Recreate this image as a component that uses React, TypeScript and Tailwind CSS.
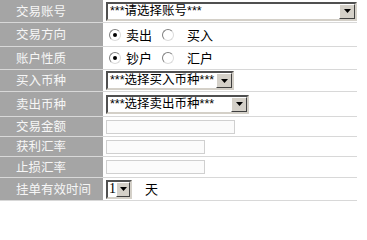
import React from "react"

const font = { fontFamily: '"Noto Sans CJK SC", "Liberation Sans", sans-serif' }

function Arrow({ w }: { w: string }) {
  return (
    <div
      className={`flex h-full shrink-0 items-center justify-center border border-t-white border-l-white border-b-[#404040] border-r-[#404040] bg-[#d4d0c8] ${w}`}
    >
      <svg width="7" height="4" viewBox="0 0 7 4">
        <path d="M0 0h7L3.5 4z" fill="#000" />
      </svg>
    </div>
  )
}

function Select({ text, width, serif }: { text: string; width: string; serif?: boolean }) {
  return (
    <div
      className={`flex h-[19px] shrink-0 items-stretch border-2 border-t-[#505050] border-l-[#505050] border-b-[#d4d0c8] border-r-[#d4d0c8] bg-white ${width}`}
    >
      <div
        className={`flex min-w-0 flex-1 items-center overflow-hidden whitespace-nowrap leading-none text-black ${serif ? "pl-[1px] text-[14px]" : "pl-[2px] text-[12.5px]"}`}
        style={{
          fontFamily: serif
            ? '"Liberation Serif", serif'
            : '"Liberation Sans", "Noto Sans CJK SC", sans-serif',
        }}
      >
        {text}
      </div>
      <Arrow w={serif ? "w-[14px]" : "w-[16px]"} />
    </div>
  )
}

function Radio({ checked }: { checked?: boolean }) {
  return (
    <div className="flex h-[12px] w-[12px] shrink-0 items-center justify-center rounded-full border border-t-[#808080] border-l-[#808080] border-b-[#dcdcdc] border-r-[#dcdcdc] bg-white">
      {checked && <div className="h-[4px] w-[4px] rounded-full bg-black" />}
    </div>
  )
}

function Row({ label, h, children }: { label: string; h: string; children: React.ReactNode }) {
  return (
    <div className={`flex ${h}`}>
      <div className="flex w-[103px] items-center bg-[#a5a5a5] pl-[16px] text-[12.5px] text-[#f6f6f6]">
        {label}
      </div>
      <div className="flex flex-1 items-center bg-white pl-[3px]">{children}</div>
    </div>
  )
}

function RadioPair({ a, b }: { a: string; b: string }) {
  return (
    <div className="flex items-center pl-[3px] text-[13px] text-black">
      <Radio checked />
      <span className="ml-[5px]">{a}</span>
      <span className="ml-[10px]" />
      <Radio />
      <span className="ml-[13px]">{b}</span>
    </div>
  )
}

function Input({ width }: { width: string }) {
  return <div className={`h-[14px] border border-[#d0d0d0] bg-[#fbfbfb] ${width}`} />
}

export default function App() {
  return (
    <div className="h-[202px] w-[367px] bg-white" style={font}>
      <div className="flex w-[357px] flex-col gap-px bg-[#d8d8d8] pb-px">
        <Row label="交易账号" h="h-[22px]">
          <Select text="***请选择账号***" width="w-[251px]" />
        </Row>
        <Row label="交易方向" h="h-[23px]">
          <RadioPair a="卖出" b="买入" />
        </Row>
        <Row label="账户性质" h="h-[22px]">
          <RadioPair a="钞户" b="汇户" />
        </Row>
        <Row label="买入币种" h="h-[21px]">
          <Select text="***选择买入币种***" width="w-[128px]" />
        </Row>
        <Row label="卖出币种" h="h-[24px]">
          <Select text="***选择卖出币种***" width="w-[143px]" />
        </Row>
        <Row label="交易金额" h="h-[19px]">
          <Input width="w-[129px]" />
        </Row>
        <Row label="获利汇率" h="h-[19px]">
          <Input width="w-[99px]" />
        </Row>
        <Row label="止损汇率" h="h-[20px]">
          <Input width="w-[99px]" />
        </Row>
        <Row label="挂单有效时间" h="h-[22px]">
          <Select text="1" width="w-[26px]" serif />
          <span className="ml-[13px] text-[13px] text-black">天</span>
        </Row>
      </div>
    </div>
  )
}
